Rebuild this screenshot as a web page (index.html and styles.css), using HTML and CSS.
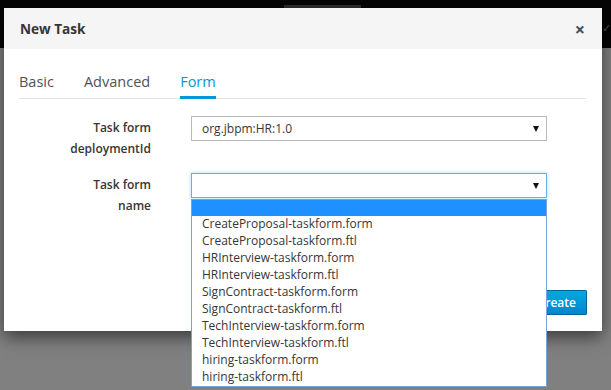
FILE: index.html
```html
<!DOCTYPE html>
<html lang="en">

<head>
    <meta charset="UTF-8">
    <title>New Task</title>
    <link rel="stylesheet" href="styles.css">
</head>

<body>
    <div class="page">
        <div class="navbar">
            <span class="nav-tab"></span>
            <span class="nav-check">&#10003;</span>
        </div>
    </div>

    <div class="modal">
        <div class="modal-header">
            <h4>New Task</h4>
            <span class="close">&times;</span>
        </div>

        <div class="modal-body">
            <ul class="tabs">
                <li>Basic</li>
                <li>Advanced</li>
                <li class="active">Form</li>
            </ul>

            <div class="form-group">
                <label>Task form<br>deploymentId</label>
                <div class="select">
                    <span>org.jbpm:HR:1.0</span>
                    <i class="caret"></i>
                </div>
            </div>

            <div class="form-group">
                <label>Task form<br>name</label>
                <div class="select focused">
                    <span></span>
                    <i class="caret"></i>
                    <ul class="dropdown">
                        <li class="selected">&nbsp;</li>
                        <li>CreateProposal-taskform.form</li>
                        <li>CreateProposal-taskform.ftl</li>
                        <li>HRInterview-taskform.form</li>
                        <li>HRInterview-taskform.ftl</li>
                        <li>SignContract-taskform.form</li>
                        <li>SignContract-taskform.ftl</li>
                        <li>TechInterview-taskform.form</li>
                        <li>TechInterview-taskform.ftl</li>
                        <li>hiring-taskform.form</li>
                        <li>hiring-taskform.ftl</li>
                    </ul>
                </div>
            </div>
        </div>

        <div class="modal-footer">
            <button class="btn-primary">Create</button>
        </div>
    </div>
</body>

</html>
```

FILE: styles.css
```css
* {
    box-sizing: border-box;
}

body {
    margin: 0;
    width: 611px;
    height: 390px;
    overflow: hidden;
    background: #808080;
    font-family: "Open Sans", "Liberation Sans", sans-serif;
    color: #363636;
    position: relative;
}

.navbar {
    height: 48px;
    background: #050505;
    position: relative;
}

.nav-tab {
    position: absolute;
    left: 284px;
    top: 5px;
    width: 77px;
    height: 3px;
    background: #2e2e2e;
}

.nav-check {
    position: absolute;
    right: 0;
    top: 20px;
    font-size: 11px;
    color: #555;
}

.modal {
    position: absolute;
    left: 4px;
    top: 8px;
    width: 598px;
    height: 323px;
    background: #fff;
    box-shadow: 0 6px 16px rgba(0, 0, 0, 0.55);
    display: flex;
    flex-direction: column;
}

.modal-header {
    height: 41px;
    background: #f5f5f5;
    display: flex;
    align-items: center;
    justify-content: space-between;
    padding: 0 17px 0 16px;
}

.modal-header h4 {
    margin: 0;
    font-size: 13.6px;
    font-weight: 700;
    color: #363636;
}

.close {
    font-size: 18px;
    font-weight: 700;
    color: #4d4d4d;
    line-height: 1;
}

.modal-body {
    flex: 1;
    padding: 15px 16px 0 15px;
}

.tabs {
    list-style: none;
    margin: 0 0 17px 0;
    padding: 0;
    display: flex;
    gap: 30px;
    border-bottom: 1px solid #e2e2e2;
}

.tabs li {
    font-size: 14.5px;
    line-height: 20px;
    padding: 8px 0 4px;
    margin-bottom: -1px;
    color: #4d5258;
    border-bottom: 3px solid transparent;
}

.tabs li.active {
    color: #0099d3;
    border-bottom-color: #0099d3;
}

.form-group {
    display: grid;
    grid-template-columns: 132px 356px;
    column-gap: 40px;
    margin-bottom: 14px;
}

.form-group label {
    text-align: right;
    font-size: 12px;
    font-weight: 600;
    line-height: 21px;
    padding-top: 1px;
    color: #363636;
}

.select {
    position: relative;
    height: 25px;
    border: 1px solid #bbb;
    display: flex;
    align-items: center;
    justify-content: space-between;
    padding: 0 7px 0 10px;
    font-size: 12px;
    color: #363636;
}

.select.focused {
    border-color: #66afe9;
    box-shadow: 0 0 4px rgba(102, 175, 233, 0.5);
}

.caret {
    width: 0;
    height: 0;
    border-left: 3px solid transparent;
    border-right: 3px solid transparent;
    border-top: 6px solid #111;
}

.dropdown {
    position: absolute;
    left: -1px;
    top: 25px;
    width: 356px;
    margin: 0;
    padding: 0;
    list-style: none;
    background: #fff;
    border: 1px solid #7f9fdb;
    z-index: 2;
}

.dropdown li {
    height: 17px;
    line-height: 16px;
    padding-left: 10px;
    font-size: 12px;
    color: #363636;
    white-space: nowrap;
}

.dropdown li.selected {
    height: 16px;
    background: #1e90ff;
}

.modal-footer {
    display: flex;
    justify-content: flex-end;
    padding: 0 15px 16px;
}

.btn-primary {
    font-family: "Open Sans", "Liberation Sans", sans-serif;
    font-size: 12px;
    font-weight: 600;
    color: #fff;
    height: 25px;
    padding: 0 10px;
    border: 1px solid #00659c;
    border-radius: 1px;
    background: linear-gradient(#00a8e1, #0085cf);
}
```
